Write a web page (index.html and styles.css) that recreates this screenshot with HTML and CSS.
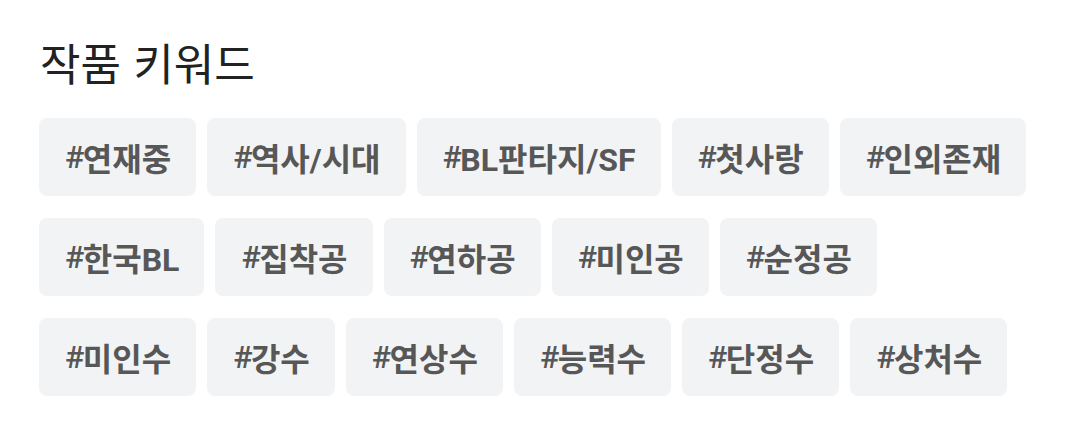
FILE: index.html
```html
<!DOCTYPE html>
<html lang="ko">
<head>
<meta charset="utf-8">
<link rel="stylesheet" href="styles.css">
</head>
<body>
<section class="keywords">
  <h2 class="title">작품 키워드</h2>
  <ul class="tags">
    <li class="tag"><span class="hash">#</span>연재중</li>
    <li class="tag"><span class="hash">#</span>역사/시대</li>
    <li class="tag"><span class="hash">#</span>BL판타지/SF</li>
    <li class="tag"><span class="hash">#</span>첫사랑</li>
    <li class="tag"><span class="hash">#</span>인외존재</li>
    <li class="tag"><span class="hash">#</span>한국BL</li>
    <li class="tag"><span class="hash">#</span>집착공</li>
    <li class="tag"><span class="hash">#</span>연하공</li>
    <li class="tag"><span class="hash">#</span>미인공</li>
    <li class="tag"><span class="hash">#</span>순정공</li>
    <li class="tag"><span class="hash">#</span>미인수</li>
    <li class="tag"><span class="hash">#</span>강수</li>
    <li class="tag"><span class="hash">#</span>연상수</li>
    <li class="tag"><span class="hash">#</span>능력수</li>
    <li class="tag"><span class="hash">#</span>단정수</li>
    <li class="tag"><span class="hash">#</span>상처수</li>
  </ul>
</section>
</body>
</html>
```

FILE: styles.css
```css
html, body {
  margin: 0;
  padding: 0;
  background: #ffffff;
}
body {
  font-family: "Noto Sans CJK KR", "Noto Sans", sans-serif;
}
.keywords {
  padding: 36px 40px 0 39px;
  width: 1001px;
}
.title {
  margin: 0 0 30px 1px;
  font-size: 44px;
  line-height: 52px;
  font-weight: 400;
  color: #222222;
}
.tags {
  list-style: none;
  margin: 0;
  padding: 0;
  display: flex;
  flex-wrap: wrap;
  column-gap: 11px;
  row-gap: 22px;
}
.tag {
  height: 78px;
  padding: 0 25px 0 26px;
  display: flex;
  align-items: center;
  background: #f2f3f5;
  border-radius: 8px;
  font-family: Roboto, "Noto Sans CJK KR", sans-serif;
  font-size: 32px;
  font-weight: 700;
  color: #575757;
}
.hash {
  font-weight: 500;
  letter-spacing: -1.5px;
}
```
